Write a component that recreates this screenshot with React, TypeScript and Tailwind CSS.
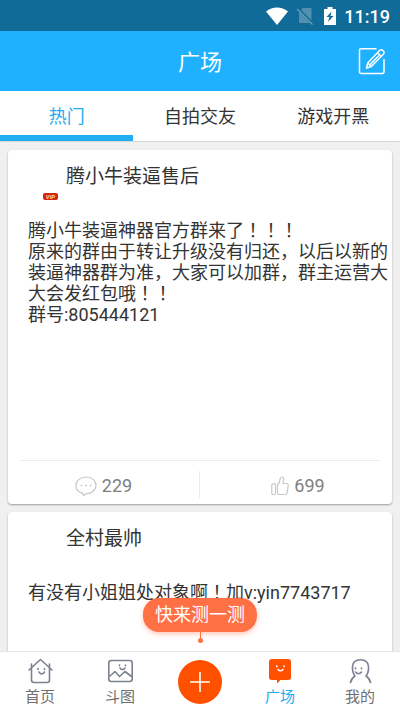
import type { ReactNode } from "react";

const sans = "font-['Roboto','Noto_Sans_CJK_SC',sans-serif]";

/* Full-width exclamation marks, centred in their cell. */
function Bang({ n = 1 }: { n?: number }) {
  return <span className="font-['Noto_Sans_CJK_TC',sans-serif] leading-none">{"！".repeat(n)}</span>;
}

function StatusBar() {
  return (
    <div className="flex h-[31px] shrink-0 items-center justify-end bg-[#116b98] pr-2.5 text-white">
      <svg className="mr-2 h-[18px] w-[22px]" viewBox="0 0 22 18" fill="currentColor" aria-hidden="true">
        <path d="M0 4.500C6.500-.8 15.500-.8 22 4.500L11 18Z" />
      </svg>
      <svg className="mr-2.5 h-[18px] w-[18px]" viewBox="0 0 18 18" aria-hidden="true">
        <path d="M7 1h8.500v15H3V5Z" fill="#538fae" />
        <path d="M1.500 1.500 17 17" stroke="#116b98" strokeWidth="3" />
        <path d="M1 2 16.500 17.500" stroke="#6d9fb9" strokeWidth="1.300" />
      </svg>
      <svg className="mr-2 h-[18px] w-3" viewBox="0 0 12 18" aria-hidden="true">
        <path d="M3.500 0h5v2H12v16H0V2h3.500Z" fill="#fff" />
        <path d="M7.500 4.500 2.500 10h3L4 15l5.500-6H6.500Z" fill="#116b98" />
      </svg>
      <span className="pt-0.5 text-lg font-medium leading-none">11:19</span>
    </div>
  );
}

function Header() {
  return (
    <header className="relative flex h-[60px] shrink-0 items-center justify-center bg-[#1fb1fe] text-white">
      <h1 className="pt-1 text-[22px] leading-8">广场</h1>
      <button type="button" aria-label="发帖" className="absolute right-3.5 top-4">
        <svg className="h-7 w-7" viewBox="0 0 28 28" fill="none" stroke="currentColor" strokeWidth="1.500" strokeLinejoin="round" strokeLinecap="round">
          <path d="M18 1.700H3a1.500 1.500 0 0 0-1.500 1.500V25A1.500 1.500 0 0 0 3 26.500H24.500A1.500 1.500 0 0 0 26 25V12.500" />
          <path d="m8.500 21 1.200-5L21.500 3.500q1.800-1.500 3.600.2t.2 3.600L13.300 19.500ZM9.700 16l3.600 3.500M19.500 5.700l3.700 3.700M12 17.700 20.500 9" />
        </svg>
      </button>
    </header>
  );
}

function Tabs() {
  return (
    <nav className="grid h-[51px] shrink-0 grid-cols-3 border-b border-[#d4d4d4] bg-white text-lg text-[#333]">
      <button type="button" aria-current="page" className="border-b-6 border-[#25adf3] pt-2 text-[#25adf3]">
        热门
      </button>
      <button type="button" className="pt-0.5">自拍交友</button>
      <button type="button" className="pt-0.5">游戏开黑</button>
    </nav>
  );
}

function CommentIcon() {
  return (
    <svg className="h-5 w-[22px]" viewBox="0 0 22 20" fill="none" stroke="#c8c8c8" strokeWidth="1.200" aria-hidden="true">
      <path d="M8 17.300C4 16.500 1 13.500 1 9.500 1 4.500 5.500 1 11 1s10 3.500 10 8.300-4.500 8.400-9.500 8.400L8.500 19.500Z" strokeLinejoin="round" />
      <path d="M5.700 9.500h1.600M10.200 9.500h1.600M14.700 9.500h1.600" strokeWidth="1.600" />
    </svg>
  );
}

function LikeIcon() {
  return (
    <svg className="h-5 w-[18px]" viewBox="0 0 18 20" fill="none" stroke="#c8c8c8" strokeWidth="1.200" strokeLinejoin="round" aria-hidden="true">
      <rect x=".8" y="7.800" width="3.700" height="10.700" rx="1" />
      <path d="M6.500 8.800C8.500 7.500 8.700 5.500 9 3.200 9.200 1.500 10 1 10.800 1c1.500 0 2 1.500 1.800 3L12 7.500h3.500c1.300 0 1.900 1 1.700 2.200l-1 6.800c-.2 1.300-1 2-2.200 2H8c-1 0-1.500-.5-1.500-1.500Z" />
    </svg>
  );
}

type PostProps = {
  name: string;
  vip?: boolean;
  stats?: { comments: number; likes: number };
  children: ReactNode;
};

function Post({ name, vip, stats, children }: PostProps) {
  return (
    <article className="flex min-h-[354px] shrink-0 flex-col rounded bg-white text-[#333] shadow-[0_1px_2px_rgba(0,0,0,0.35)]">
      <div className="flex h-[68px]">
        <div className="flex w-[58px] items-end justify-end pb-[18px] pr-2">
          {vip && (
            <span className="flex h-[7px] w-[15px] items-center justify-center rounded-xs bg-[#d3260b] text-[6px] font-bold italic leading-none text-[#ffd9a0]">
              VIP
            </span>
          )}
        </div>
        <h2 className="pt-[11px] text-[19px] leading-8">{name}</h2>
      </div>
      <div className="flex-1 break-all pl-5 pt-0.5 text-lg leading-[21px]">{children}</div>
      {stats && (
        <footer className="mx-3 grid grid-cols-2 border-t border-[#ececec] pb-1.5 pt-2.5 text-lg text-[#808080]">
          <button
            type="button"
            aria-label={`评论 ${stats.comments}`}
            className="flex h-[27px] items-center justify-center gap-[5px] border-r border-[#ececec] pr-3 pt-0.5"
          >
            <CommentIcon />
            {stats.comments}
          </button>
          <button
            type="button"
            aria-label={`点赞 ${stats.likes}`}
            className="flex h-[27px] items-center justify-center gap-[5px] pl-4 pt-0.5"
          >
            <LikeIcon />
            {stats.likes}
          </button>
        </footer>
      )}
    </article>
  );
}

function NavItem({ label, active, children }: { label: string; active?: boolean; children: ReactNode }) {
  return (
    <button
      type="button"
      aria-current={active ? "page" : undefined}
      className={`flex flex-col items-center pt-1.5 text-[15px] leading-6 ${active ? "text-[#25adf3]" : "text-[#6f6f6f]"}`}
    >
      <svg className="h-[27px] w-[27px]" viewBox="0 0 27 27" fill="none" stroke="#7c8191" strokeWidth="1.600" strokeLinecap="round" strokeLinejoin="round" aria-hidden="true">
        {children}
      </svg>
      {label}
    </button>
  );
}

function BottomNav() {
  return (
    <nav className="relative grid h-[60px] shrink-0 grid-cols-5 border-t border-[#e6e6e6] bg-white">
      <NavItem label="首页">
        <path d="M2 12 13.500 1.500 25 12M4.500 6v5.500M22.500 6v5.500M4.500 10.500V22q0 2.500 2.500 2.500h13q2.500 0 2.500-2.500V10.500" />
        <path d="M11 10.500v1M17.500 10.500v1M12 14q2.700 4 5.500 0" />
      </NavItem>
      <NavItem label="斗图">
        <rect x="1.800" y="2.500" width="23.400" height="21" rx="2.500" />
        <path d="m3 18 5-4.500 4.500 5 5.500-5 6.500 5M12.500 7v.8M18.500 7v.8M13 10q2.500 3.500 5 0" />
      </NavItem>
      <div className="flex items-center justify-center">
        <button type="button" aria-label="发布" className="flex h-11 w-11 items-center justify-center rounded-full bg-[#ff5000]">
          <svg className="h-5 w-5" viewBox="0 0 20 20" stroke="#fff" strokeWidth="1.600" aria-hidden="true">
            <path d="M10 0v20M0 10h20" />
          </svg>
        </button>
      </div>
      <NavItem label="广场" active>
        <path d="M5 1h16q3 0 3 3v15.500q0 2.500-3 2.500H13.500L10 25.500V22H5q-3 0-3-2.500V4q0-3 3-3Z" fill="#ff5000" stroke="none" />
        <path d="M9.800 8v.8M17 8v.8M11 11.500q2.500 2.500 5 0" stroke="#fff" />
      </NavItem>
      <NavItem label="我的">
        <path d="M3.500 24.500q.8-4 4.500-6.500C5.500 15 5.300 12 5.500 8.500 5.800 3.500 8.500 1.700 13.500 1.700S21.200 3.500 21.500 8.500c.2 3.500 0 6.500-2.500 9.500q3.700 2.500 4.500 6.500" />
        <path d="M8.500 10v.8M14.500 10v.8M8.500 14q3 3.500 6 0" />
      </NavItem>
      <button type="button" className="absolute bottom-[68px] left-1/2 flex -translate-x-1/2 flex-col items-center text-lg text-white">
        <span className="whitespace-nowrap rounded-2xl bg-[#ff7045] px-3 leading-[34px] shadow-[0_2px_5px_rgba(255,112,69,0.4)]">
          快来测一测
        </span>
        <span className="h-1.5 w-px bg-[#ff7045]" />
        <span className="h-[5px] w-[5px] rounded-full bg-[#ff7045]" />
      </button>
    </nav>
  );
}

export default function App() {
  return (
    <div className={`flex h-screen flex-col bg-[#f0f0f0] ${sans}`}>
      <StatusBar />
      <Header />
      <Tabs />
      <main className="flex min-h-0 flex-1 flex-col gap-2 overflow-y-auto px-2 pt-2 [scrollbar-width:none]">
        <Post name="腾小牛装逼售后" vip stats={{ comments: 229, likes: 699 }}>
          <p>
            腾小牛装逼神器官方群来了
            <Bang n={3} />
          </p>
          <p>
            原来的群由于转让升级没有归还，以后以新的装逼神器群为准，大家可以加群，群主运营大大会发红包哦
            <Bang n={2} />
          </p>
          <p>群号:805444121</p>
        </Post>
        <Post name="全村最帅">
          <p>
            有没有小姐姐处对象啊
            <Bang />
            加v:yin7743717
          </p>
        </Post>
      </main>
      <BottomNav />
    </div>
  );
}
